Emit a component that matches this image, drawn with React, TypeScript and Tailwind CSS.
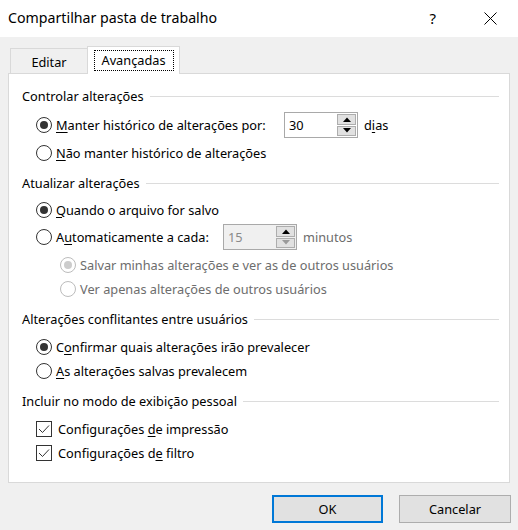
import React from 'react';

const Radio = ({ checked, disabled }: { checked?: boolean; disabled?: boolean }) => (
  <span
    className={`flex h-[16px] w-[16px] shrink-0 items-center justify-center rounded-full border bg-white ${
      disabled ? 'border-[#bcbcbc]' : 'border-[#333333]'
    }`}
  >
    {checked && (
      <span className={`h-[8px] w-[8px] rounded-full ${disabled ? 'bg-[#cccccc]' : 'bg-[#333333]'}`} />
    )}
  </span>
);

const Check = () => (
  <span className="flex h-[16px] w-[16px] shrink-0 items-center justify-center border border-[#333333] bg-white">
    <svg width="12" height="10" viewBox="0 0 12 10" fill="none">
      <path d="M1 5l3.5 3.5L11 1.5" stroke="#333333" strokeWidth="1" />
    </svg>
  </span>
);

const Heading = ({ children, className = '' }: { children: React.ReactNode; className?: string }) => (
  <div className={`flex h-[24px] items-center gap-[6px] ${className}`}>
    <span className="whitespace-nowrap">{children}</span>
    <span className="h-px flex-1 bg-[#dcdcdc]" />
  </div>
);

const Arrow = ({ up, dim }: { up?: boolean; dim?: boolean }) => (
  <svg width="8" height="5" viewBox="0 0 8 5">
    <path d={up ? 'M0 5L4 0.5L8 5Z' : 'M0 0L4 4.5L8 0Z'} fill={dim ? '#9a9a9a' : '#000000'} />
  </svg>
);

const Spin = ({ value, disabled }: { value: string; disabled?: boolean }) => (
  <div
    className={`flex h-[26px] w-[74px] border border-[#a9a9a9] ${disabled ? 'bg-[#f0f0f0] text-[#8a8a8a]' : 'bg-white'}`}
  >
    <div className="flex flex-1 items-center pl-[4px]">{value}</div>
    <div className="my-px mr-px flex w-[19px] flex-col gap-px">
      <div className="flex flex-1 items-center justify-center border border-[#adadad] bg-[#e1e1e1]">
        <Arrow up />
      </div>
      <div className="flex flex-1 items-center justify-center border border-[#adadad] bg-[#e1e1e1]">
        <Arrow dim={disabled} />
      </div>
    </div>
  </div>
);

const U = ({ children }: { children: React.ReactNode }) => <span className="underline underline-offset-2">{children}</span>;

const App: React.FC = () => {
  return (
    <div className="flex h-[530px] w-[518px] flex-col bg-[#f0f0f0] font-['Noto_Sans',sans-serif] text-[12.75px] leading-none text-black">
      {/* Title bar */}
      <div className="flex h-[37px] items-center bg-white pl-[8px]">
        <span className="flex-1 text-[14.2px]">Compartilhar pasta de trabalho</span>
        <span className="mr-[48px] text-[15px]">?</span>
        <svg className="mr-[21px]" width="13" height="13" viewBox="0 0 13 13">
          <path d="M0.5 0.5L12.5 12.5M12.5 0.5L0.5 12.5" stroke="#000" strokeWidth="1" />
        </svg>
      </div>

      {/* Tabs */}
      <div className="mt-[9px] flex items-end pl-[10px]">
        <div className="-mb-px flex h-[26px] w-[77px] items-center justify-center border-l border-t border-[#d9d9d9] pt-[2px]">
          Editar
        </div>
        <div className="relative z-10 -mb-px flex h-[28px] w-[93px] items-center justify-center border-x border-t border-[#d9d9d9] bg-white">
          <span className="flex h-[21px] w-[80px] items-center justify-center border border-dotted border-black">Avançadas</span>
        </div>
      </div>

      {/* Panel */}
      <div className="mx-[8px] flex h-[410px] w-[502px] flex-col border border-[#d9d9d9] bg-white pl-[13px] pr-[10px] pt-[10px]">
        <Heading>Controlar alterações</Heading>
        <div className="mt-[4px] flex h-[26px] items-center pl-[14px]">
          <Radio checked />
          <span className="ml-[4px] w-[228px]">
            <U>M</U>anter histórico de alterações por:
          </span>
          <Spin value="30" />
          <span className="ml-[6px]">
            d<U>i</U>as
          </span>
        </div>
        <div className="mt-[3px] flex h-[24px] items-center pl-[14px]">
          <Radio />
          <span className="ml-[4px]">
            <U>N</U>ão manter histórico de alterações
          </span>
        </div>

        <Heading className="mt-[6px]">Atualizar alterações</Heading>
        <div className="mt-[3px] flex h-[24px] items-center pl-[14px]">
          <Radio checked />
          <span className="ml-[4px]">
            <U>Q</U>uando o arquivo for salvo
          </span>
        </div>
        <div className="mt-[2px] flex h-[26px] items-center pl-[14px]">
          <Radio />
          <span className="ml-[4px] w-[167px]">
            A<U>u</U>tomaticamente a cada:
          </span>
          <Spin value="15" disabled />
          <span className="ml-[6px] text-[#6d6d6d]">minutos</span>
        </div>
        <div className="mt-[3px] flex h-[24px] items-center pl-[38px] text-[#6d6d6d]">
          <Radio checked disabled />
          <span className="ml-[4px]">Salvar minhas alterações e ver as de outros usuários</span>
        </div>
        <div className="flex h-[24px] items-center pl-[38px] text-[#6d6d6d]">
          <Radio disabled />
          <span className="ml-[4px]">Ver apenas alterações de outros usuários</span>
        </div>

        <Heading className="mt-[6px]">Alterações conflitantes entre usuários</Heading>
        <div className="mt-[4px] flex h-[24px] items-center pl-[14px]">
          <Radio checked />
          <span className="ml-[4px]">
            C<U>o</U>nfirmar quais alterações irão prevalecer
          </span>
        </div>
        <div className="flex h-[24px] items-center pl-[14px]">
          <Radio />
          <span className="ml-[4px]">
            <U>A</U>s alterações salvas prevalecem
          </span>
        </div>

        <Heading className="mt-[6px]">Incluir no modo de exibição pessoal</Heading>
        <div className="mt-[4px] flex h-[24px] items-center pl-[14px]">
          <Check />
          <span className="ml-[6px]">
            Configurações <U>d</U>e impressão
          </span>
        </div>
        <div className="flex h-[24px] items-center pl-[14px]">
          <Check />
          <span className="ml-[6px]">
            Configurações d<U>e</U> filtro
          </span>
        </div>
      </div>

      {/* Buttons */}
      <div className="mt-[12px] flex justify-end gap-[16px] pr-[7px]">
        <button className="flex h-[28px] w-[111px] items-center justify-center border-2 border-[#0078d7] bg-[#e1e1e1]">
          OK
        </button>
        <button className="flex h-[28px] w-[112px] items-center justify-center border border-[#adadad] bg-[#e1e1e1]">
          Cancelar
        </button>
      </div>
    </div>
  );
};

export default App;
